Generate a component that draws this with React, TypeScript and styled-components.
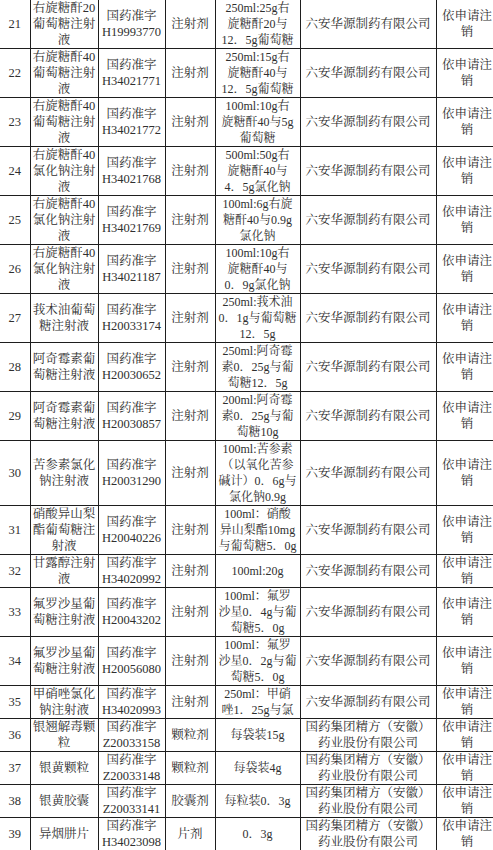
import React from 'react';
import styled, { createGlobalStyle } from 'styled-components';

interface IDrug {
  no: number;
  name: string[];
  code: string;
  form: string;
  spec: string[];
  company: string[];
}

const HUAYUAN = ['六安华源制药有限公司'];
const JINGFANG = ['国药集团精方（安徽）', '药业股份有限公司'];

const drugs: IDrug[] = [
  { no: 21, name: ['右旋糖酐20', '葡萄糖注射', '液'], code: 'H19993770', form: '注射剂', spec: ['250ml:25g右', '旋糖酐20与', '12．5g葡萄糖'], company: HUAYUAN },
  { no: 22, name: ['右旋糖酐40', '葡萄糖注射', '液'], code: 'H34021771', form: '注射剂', spec: ['250ml:15g右', '旋糖酐40与', '12．5g葡萄糖'], company: HUAYUAN },
  { no: 23, name: ['右旋糖酐40', '葡萄糖注射', '液'], code: 'H34021772', form: '注射剂', spec: ['100ml:10g右', '旋糖酐40与5g', '葡萄糖'], company: HUAYUAN },
  { no: 24, name: ['右旋糖酐40', '氯化钠注射', '液'], code: 'H34021768', form: '注射剂', spec: ['500ml:50g右', '旋糖酐40与', '4．5g氯化钠'], company: HUAYUAN },
  { no: 25, name: ['右旋糖酐40', '氯化钠注射', '液'], code: 'H34021769', form: '注射剂', spec: ['100ml:6g右旋', '糖酐40与0.9g', '氯化钠'], company: HUAYUAN },
  { no: 26, name: ['右旋糖酐40', '氯化钠注射', '液'], code: 'H34021187', form: '注射剂', spec: ['100ml:10g右', '旋糖酐40与', '0．9g氯化钠'], company: HUAYUAN },
  { no: 27, name: ['莪术油葡萄', '糖注射液'], code: 'H20033174', form: '注射剂', spec: ['250ml:莪术油', '0．1g与葡萄糖', '12．5g'], company: HUAYUAN },
  { no: 28, name: ['阿奇霉素葡', '萄糖注射液'], code: 'H20030652', form: '注射剂', spec: ['250ml:阿奇霉', '素0．25g与葡', '萄糖12．5g'], company: HUAYUAN },
  { no: 29, name: ['阿奇霉素葡', '萄糖注射液'], code: 'H20030857', form: '注射剂', spec: ['200ml:阿奇霉', '素0．25g与葡', '萄糖10g'], company: HUAYUAN },
  { no: 30, name: ['苦参素氯化', '钠注射液'], code: 'H20031290', form: '注射剂', spec: ['100ml:苦参素', '（以氧化苦参', '碱计）0．6g与', '氯化钠0.9g'], company: HUAYUAN },
  { no: 31, name: ['硝酸异山梨', '酯葡萄糖注', '射液'], code: 'H20040226', form: '注射剂', spec: ['100ml：硝酸', '异山梨酯10mg', '与葡萄糖5．0g'], company: HUAYUAN },
  { no: 32, name: ['甘露醇注射', '液'], code: 'H34020992', form: '注射剂', spec: ['100ml:20g'], company: HUAYUAN },
  { no: 33, name: ['氟罗沙星葡', '萄糖注射液'], code: 'H20043202', form: '注射剂', spec: ['100ml：氟罗', '沙星0．4g与葡', '萄糖5．0g'], company: HUAYUAN },
  { no: 34, name: ['氟罗沙星葡', '萄糖注射液'], code: 'H20056080', form: '注射剂', spec: ['100ml：氟罗', '沙星0．2g与葡', '萄糖5．0g'], company: HUAYUAN },
  { no: 35, name: ['甲硝唑氯化', '钠注射液'], code: 'H34020993', form: '注射剂', spec: ['250ml：甲硝', '唑1．25g与氯'], company: HUAYUAN },
  { no: 36, name: ['银翘解毒颗', '粒'], code: 'Z20033158', form: '颗粒剂', spec: ['每袋装15g'], company: JINGFANG },
  { no: 37, name: ['银黄颗粒'], code: 'Z20033148', form: '颗粒剂', spec: ['每袋装4g'], company: JINGFANG },
  { no: 38, name: ['银黄胶囊'], code: 'Z20033141', form: '胶囊剂', spec: ['每粒装0．3g'], company: JINGFANG },
  { no: 39, name: ['异烟肼片'], code: 'H34023098', form: '片剂', spec: ['0．3g'], company: JINGFANG },
];

const widths = [30, 68, 67, 50, 85, 136, 62];

function Lines({ items }: { items: string[] }) {
  return (
    <>
      {items.map((t, i) => (
        <Line key={i}>{t}</Line>
      ))}
    </>
  );
}

function App() {
  return (
    <>
      <GlobalStyle />
      <Sheet>
        <colgroup>
          {widths.map((w, i) => (
            <col key={i} style={{ width: w }} />
          ))}
        </colgroup>
        <tbody>
          {drugs.map((d) => (
            <Row key={d.no}>
              <Cell>{d.no}</Cell>
              <Cell>
                <Lines items={d.name} />
              </Cell>
              <Cell>
                <Lines items={['国药准字', d.code]} />
              </Cell>
              <Cell>{d.form}</Cell>
              <Cell $tight>
                <Lines items={d.spec} />
              </Cell>
              <Cell>
                <Lines items={d.company} />
              </Cell>
              <Cell>
                <Lines items={['依申请注', '销']} />
              </Cell>
            </Row>
          ))}
        </tbody>
      </Sheet>
    </>
  );
}

export default App;

const GlobalStyle = createGlobalStyle`
  html, body {
    margin: 0;
    padding: 0;
    background: #ffffff;
    overflow: hidden;
  }
  body {
    font-family: "Liberation Serif", "Noto Serif CJK SC", "Noto Sans CJK SC", serif;
    color: #2f2f2f;
  }
`;

const Sheet = styled.table`
  border-collapse: collapse;
  table-layout: fixed;
  width: 498px;
  font-size: 12.5px;
  line-height: 16px;
`;

const Row = styled.tr`
  &:first-child > td {
    border-top: none;
  }
  > td:first-child {
    border-left: none;
  }
`;

const Cell = styled.td<{ $tight?: boolean }>`
  border: 1px solid #1e1e1e;
  padding: 0;
  text-align: center;
  vertical-align: middle;
  white-space: nowrap;
  overflow: hidden;
  font-weight: 400;
  font-size: ${(p) => (p.$tight ? '12px' : '12.5px')};
`;

const Line = styled.span`
  display: block;
  height: 16px;
`;
